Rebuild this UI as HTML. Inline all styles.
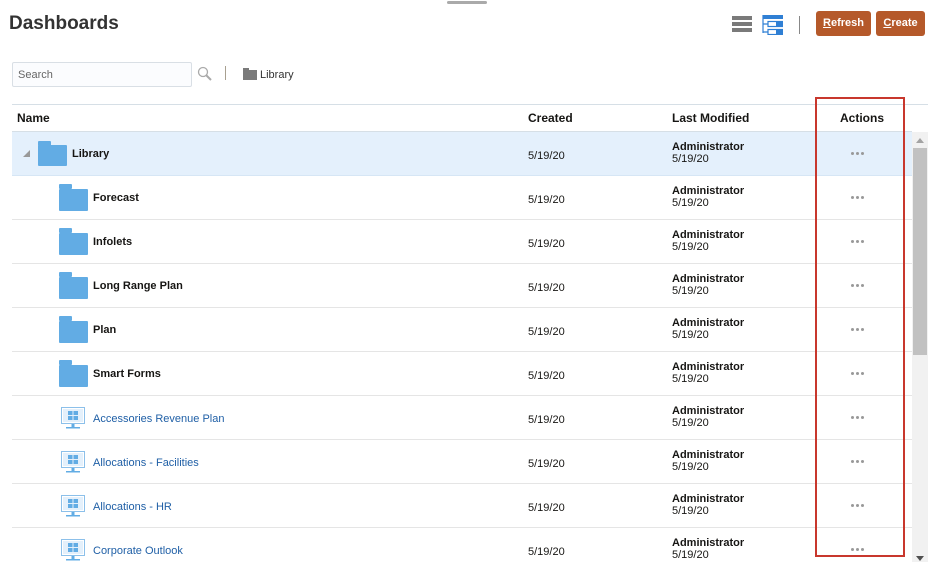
<!DOCTYPE html>
<html><head><meta charset="utf-8"><style>
*{box-sizing:border-box;margin:0;padding:0}
html,body{width:933px;height:562px;overflow:hidden}
body{background:#fff;font-family:"Liberation Sans",Arial,sans-serif;position:relative;color:#161513}
.abs{position:absolute}
h1{position:absolute;left:9px;top:13px;font-size:19px;font-weight:bold;color:#333}
.btn{position:absolute;top:11px;height:25px;background:#b5592a;color:#fff;font-size:11px;font-weight:bold;border-radius:3px;text-align:center;line-height:25px}
.row{position:absolute;left:12px;width:900px;height:44px;border-bottom:1px solid #e5e5e5}
.t{position:absolute;font-size:12px}
.b{font-weight:bold}
.dots{position:absolute;left:839px;top:20px;font-size:0}
.dots i{display:inline-block;width:3px;height:3px;border-radius:2px;background:#999;margin-right:2px}
</style></head><body>
<div class="abs" style="left:447px;top:1px;width:40px;height:3px;background:#aaa;border-radius:2px"></div>
<h1>Dashboards</h1>
<div class="abs" style="left:732px;top:16px;width:20px;height:4px;background:#7a7a7a"></div>
<div class="abs" style="left:732px;top:22px;width:20px;height:4px;background:#7a7a7a"></div>
<div class="abs" style="left:732px;top:28px;width:20px;height:4px;background:#7a7a7a"></div>
<svg class="abs" style="left:762px;top:15px" width="21" height="20" viewBox="0 0 21 20"><path d="M1 0v18M1 9h5M1 17h5" stroke="#2f7fd4" stroke-width="1.2" fill="none"/><rect x="1" y="0" width="20" height="4" fill="#2f7fd4"/><rect x="6" y="6.5" width="15" height="5" fill="none" stroke="#2f7fd4" stroke-width="1.2"/><rect x="14" y="6" width="7" height="6" fill="#2f7fd4"/><rect x="6" y="14.5" width="15" height="5" fill="none" stroke="#2f7fd4" stroke-width="1.2"/><rect x="14" y="14" width="7" height="6" fill="#2f7fd4"/></svg>
<div class="abs" style="left:799px;top:16px;width:1px;height:18px;background:#888"></div>
<div class="btn" style="left:816px;width:55px"><u>R</u>efresh</div>
<div class="btn" style="left:876px;width:49px"><u>C</u>reate</div>
<div class="abs" style="left:12px;top:62px;width:180px;height:25px;border:1px solid #d9dfe5;background:#fbfcfe;border-radius:2px;font-size:11px;color:#666;padding:6px 5px">Search</div>
<svg class="abs" style="left:197px;top:66px" width="15" height="15"><circle cx="6" cy="6" r="4.5" fill="none" stroke="#aaa" stroke-width="1.3"/><path d="M9 9l5 5" stroke="#aaa" stroke-width="2"/></svg>
<div class="abs" style="left:225px;top:66px;width:1px;height:14px;background:#a8a090"></div>
<div class="abs" style="left:243px;top:68px;width:6px;height:2px;background:#7a7a7a"></div>
<div class="abs" style="left:243px;top:70px;width:14px;height:10px;background:#7a7a7a"></div>
<div class="t" style="left:260px;top:69px;font-size:11px;color:#333">Library</div>
<div class="abs" style="left:12px;top:104px;width:916px;height:1px;background:#d6dfe6"></div>
<div class="t b" style="left:17px;top:111px">Name</div>
<div class="t b" style="left:528px;top:111px">Created</div>
<div class="t b" style="left:672px;top:111px">Last Modified</div>
<div class="t b" style="left:840px;top:111px">Actions</div>
<div class="abs" style="left:12px;top:131px;width:900px;height:1px;background:#d6dfe6"></div>

<div class="row" style="top:132px;background:#e4f0fc;border-bottom:1px solid #d6e6f5">
<div class="abs" style="left:11px;top:18px;width:0;height:0;border-left:7px solid transparent;border-bottom:7px solid #999"></div>
<div class="abs" style="left:26px;top:9px;width:13px;height:5px;background:#62ace4;border-radius:1px"></div>
<div class="abs" style="left:26px;top:13px;width:29px;height:21px;background:#62ace4;border-radius:1px"></div>
<div class="t b" style="left:60px;top:16px;font-size:11px">Library</div>
<div class="t" style="left:516px;top:18px;font-size:11px">5/19/20</div>
<div class="t b" style="left:660px;top:9px;font-size:11px">Administrator</div>
<div class="t" style="left:660px;top:21px;font-size:11px">5/19/20</div>
<div class="dots"><i></i><i></i><i></i></div>
</div>

<div id="rows"></div>
<script>
const items=[["Forecast",0],["Infolets",0],["Long Range Plan",0],["Plan",0],["Smart Forms",0],["Accessories Revenue Plan",1],["Allocations - Facilities",1],["Allocations - HR",1],["Corporate Outlook",1]];
let h="";
items.forEach((it,i)=>{const top=176+i*44;
let icon=it[1]?
`<svg class="abs" style="left:49px;top:11px" width="24" height="22"><rect x="0.5" y="0.5" width="23" height="16" fill="#fff" stroke="#8cc0ea"/><rect x="2" y="2" width="20" height="13" fill="#e4f0fb"/><rect x="7" y="4" width="4.5" height="4" fill="#62ace4"/><rect x="12.5" y="4" width="4.5" height="4" fill="#62ace4"/><rect x="7" y="9" width="4.5" height="4" fill="#62ace4"/><rect x="12.5" y="9" width="4.5" height="4" fill="#62ace4"/><rect x="10.5" y="17" width="3" height="3" fill="#62ace4"/><rect x="5" y="20" width="14" height="1.5" fill="#62ace4"/></svg>`:
`<div class="abs" style="left:47px;top:8px;width:13px;height:5px;background:#62ace4;border-radius:1px"></div><div class="abs" style="left:47px;top:13px;width:29px;height:22px;background:#62ace4;border-radius:1px"></div>`;
let name=it[1]?`<div class="t" style="left:81px;top:17px;font-size:11px;color:#1f5fa6">${it[0]}</div>`:`<div class="t b" style="left:81px;top:16px;font-size:11px">${it[0]}</div>`;
h+=`<div class="row" style="top:${top}px">${icon}${name}<div class="t" style="left:516px;top:18px;font-size:11px">5/19/20</div><div class="t b" style="left:660px;top:9px;font-size:11px">Administrator</div><div class="t" style="left:660px;top:21px;font-size:11px">5/19/20</div><div class="dots"><i></i><i></i><i></i></div></div>`;});
document.getElementById("rows").innerHTML=h;
</script>
<div class="abs" style="left:912px;top:132px;width:16px;height:430px;background:#f1f1f1"></div>
<div class="abs" style="left:916px;top:138px;width:0;height:0;border-left:4px solid transparent;border-right:4px solid transparent;border-bottom:5px solid #a3a3a3"></div>
<div class="abs" style="left:913px;top:148px;width:14px;height:207px;background:#c1c1c1"></div>
<div class="abs" style="left:916px;top:556px;width:0;height:0;border-left:4px solid transparent;border-right:4px solid transparent;border-top:5px solid #505050"></div>
<div class="abs" style="left:815px;top:97px;width:90px;height:460px;border:2px solid #c8372d"></div>
</body></html>
